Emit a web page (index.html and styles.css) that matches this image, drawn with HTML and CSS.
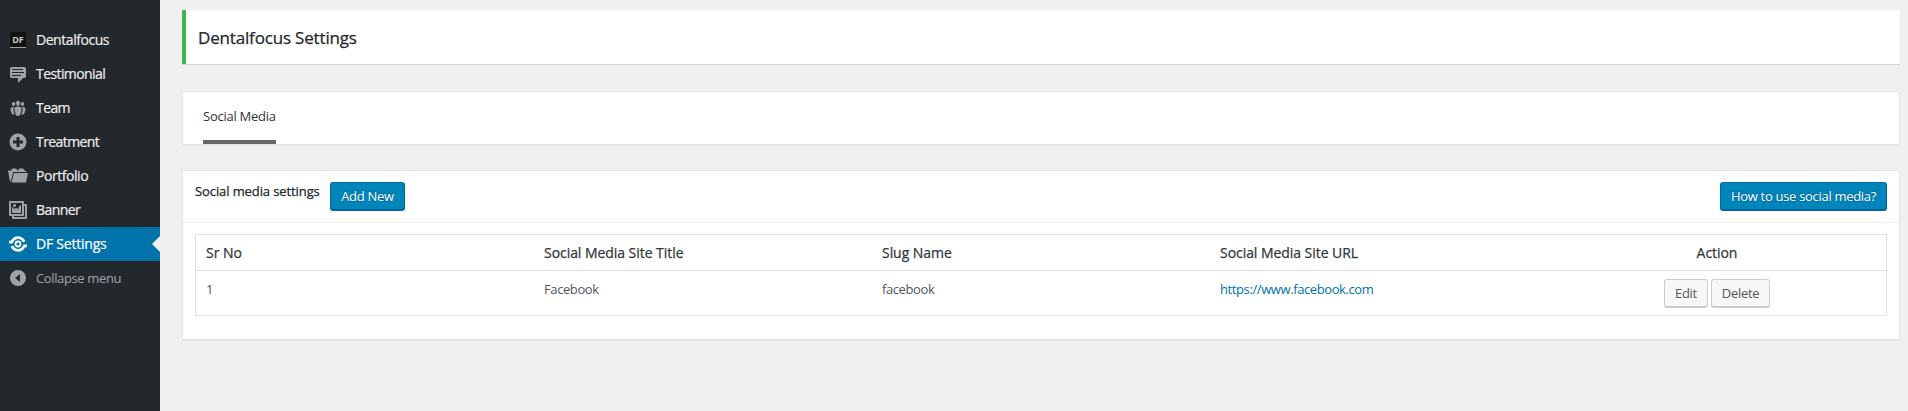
FILE: index.html
```html
<!DOCTYPE html>
<html lang="en">
<head>
<meta charset="utf-8">
<title>Dentalfocus Settings</title>
<link rel="stylesheet" href="styles.css">
</head>
<body>
<div class="layout">
  <nav class="sidebar">
    <a class="item"><span class="df-logo">DF</span><span class="label">Dentalfocus</span></a>
    <a class="item"><svg class="icon" viewBox="0 0 20 20"><path d="M4 3h12c.55 0 1.02.2 1.41.59S18 4.45 18 5v7c0 .55-.2 1.02-.59 1.41S16.55 14 16 14h-1l-5 5v-5H4c-.55 0-1.02-.2-1.41-.59S2 12.550 2 12V5c0-.55.2-1.02.59-1.41S3.45 3 4 3zm11 2H4v1h11V5zm1 3H4v1h12V8zm-3 3H4v1h9v-1z"/></svg><span class="label tight">Testimonial</span></a>
    <a class="item"><svg class="icon" viewBox="0 0 20 20"><path d="M8.03 4.46c-.29 1.28.55 3.46 1.97 3.46 1.41 0 2.25-2.18 1.96-3.46-.22-.98-1.08-1.63-1.96-1.63-.89 0-1.74.65-1.97 1.63zm-4.13.9c-.25 1.08.47 2.93 1.67 2.93s1.92-1.85 1.67-2.93c-.19-.83-.92-1.39-1.67-1.39s-1.48.56-1.67 1.39zm8.86 0c-.25 1.08.47 2.93 1.66 2.93 1.2 0 1.92-1.85 1.67-2.93-.19-.83-.92-1.390-1.670-1.390-.74 0-1.470.56-1.660 1.390zm-.59 11.430l1.250-4.300C14.200 10 12.710 8.470 10 8.470c-2.720 0-4.210 1.530-3.440 4.020l1.260 4.300C8.050 17.510 9 18 10 18c.98 0 1.940-.49 2.170-1.210zM6.100 9.160C3.200 8.600 1.900 10.200 2.600 12.200l1.100 3.400c.3.800 1.500 1.200 2.900.9l-1.100-3.700C5.100 11.200 5.300 10 6.100 9.160zM13.900 9.160c2.900-.56 4.200 1.040 3.500 3.040l-1.100 3.400c-.3.800-1.500 1.200-2.900.9l1.100-3.700c.4-1.600.2-2.800-.6-3.640z"/></svg><span class="label tight">Team</span></a>
    <a class="item"><svg class="icon" viewBox="0 0 20 20"><path fill-rule="evenodd" d="M10 1.500a8.500 8.500 0 1 1 0 17 8.500 8.500 0 0 1 0-17zM8.500 5v3.500H5v3h3.500V15h3v-3.500H15v-3h-3.500V5z"/></svg><span class="label tight">Treatment</span></a>
    <a class="item"><svg class="icon" viewBox="0 0 20 20"><path d="M0 4.500h3.500V3.500L4.500 2.500H8l1 1v1h1.500v-1l1-1H15l1 1v1h2V6H5.300L3 14.500 2 16z"/><path d="M3.500 16.500L6 7h14l-2 9.500z"/></svg><span class="label">Portfolio</span></a>
    <a class="item"><svg class="icon" viewBox="0 0 20 20"><path d="M16 4h1.96c.57 0 1.04.47 1.04 1.04v12.92c0 .57-.47 1.04-1.04 1.04H5.04C4.47 19 4 18.530 4 17.960V16H2.040C1.470 16 1 15.530 1 14.960V2.040C1 1.470 1.470 1 2.040 1h12.920c.57 0 1.040.47 1.040 1.040V4zM3 14h11V3H3v11zm5-8.500C8 4.670 7.330 4 6.500 4S5 4.670 5 5.500 5.670 7 6.500 7 8 6.330 8 5.500zm2 4.500s1-5 3-5v8H4V7c2 0 2 3 2 3s.33-2 2-2 2 2 2 2zm7 7V6h-1v8.960c0 .57-.47 1.040-1.040 1.040H6v1h11z"/></svg><span class="label tight">Banner</span></a>
    <a class="item current"><svg class="icon" viewBox="0 0 20 20"><g fill="none" stroke="currentColor"><circle cx="10" cy="10" r="2.500" stroke-width="1.800"/><path stroke-width="2.800" d="M1 8.200h2.600C5.200 5.200 7 3.700 10 3.700c3 0 4.800 1.500 6.200 4.100M19 11.800h-2.600C14.800 14.800 13 16.300 10 16.300c-3 0-4.800-1.500-6.200-4.100"/></g></svg><span class="label settings">DF Settings</span></a>
    <a class="item collapse"><svg class="icon" viewBox="0 0 20 20"><path fill-rule="evenodd" d="M10 2a8 8 0 1 1 0 16 8 8 0 0 1 0-16zM12 6l-5 4 5 4z"/></svg><span class="label">Collapse menu</span></a>
  </nav>
  <main class="content">
    <header class="page-header"><h1 class="page-title">Dentalfocus Settings</h1></header>
    <div class="tabs"><a class="tab">Social Media</a></div>
    <section class="panel">
      <div class="panel-head">
        <h2 class="panel-title">Social media settings</h2>
        <button class="button primary add">Add New</button>
        <button class="button primary help">How to use social media?</button>
      </div>
      <div class="grid">
        <div class="row head">
          <span class="cell">Sr No</span><span class="cell">Social Media Site Title</span><span class="cell">Slug Name</span><span class="cell">Social Media Site URL</span><span class="cell center">Action</span>
        </div>
        <div class="row">
          <span class="cell">1</span><span class="cell">Facebook</span><span class="cell">facebook</span><span class="cell"><a class="link">https://www.facebook.com</a></span>
          <span class="cell actions"><button class="button edit">Edit</button><button class="button delete">Delete</button></span>
        </div>
      </div>
    </section>
  </main>
</div>
</body>
</html>
```
FILE: styles.css
```css
* { box-sizing: border-box; }
body { margin: 0; background: #f0f0f0; color: #23282d; font-family: "Open Sans", "Noto Sans", sans-serif; font-size: 13px; line-height: 20px; }
.layout { display: flex; height: 411px; overflow: hidden; }
.sidebar { width: 160px; flex: none; padding-top: 23px; background: #23282d; }
.item { position: relative; display: flex; align-items: center; height: 34px; padding-left: 8px; color: #9ea3a8; font-size: 14px; white-space: nowrap; }
.icon { width: 20px; height: 20px; flex: none; fill: currentColor; }
.label { margin-left: 8px; color: #eee; letter-spacing: -0.45px; -webkit-text-stroke: 0.2px; }
.tight { letter-spacing: -0.58px; }
.df-logo { width: 16px; height: 16px; margin: 0 2px; background: #111; border-bottom: 1px solid #9ea3a8; color: #ccc; font-size: 9px; font-weight: 700; line-height: 15px; text-align: center; }
.current { background: #0073aa; color: #fff; }
.settings { color: #fff; letter-spacing: -0.22px; }
.current::after { content: ""; position: absolute; right: 0; top: 9px; border: 8px solid transparent; border-left-width: 0; border-right-color: #f0f0f0; }
.collapse .label { color: #a0a5aa; font-size: 13px; letter-spacing: -0.37px; -webkit-text-stroke: 0; }
.content { flex: 1; padding: 10px 8px 0 22px; }
.page-header { height: 54px; padding: 2px 0 0 12px; display: flex; align-items: center; background: #fff; border-left: 4px solid #46b450; box-shadow: 0 1px 1px rgba(0,0,0,.1); }
.page-title { margin: 0; font-size: 17px; font-weight: 500; letter-spacing: -0.17px; -webkit-text-stroke: 0.25px; }
.tabs { height: 54px; margin-top: 27px; padding-left: 20px; display: flex; background: #fff; border: 1px solid #e5e5e5; box-shadow: 0 1px 1px rgba(0,0,0,.04); }
.tab { width: 73px; padding-top: 14px; border-bottom: 4px solid #666; font-size: 13px; color: #333; letter-spacing: -0.25px; white-space: nowrap; }
.panel { height: 170px; margin-top: 25px; background: #fff; border: 1px solid #e5e5e5; box-shadow: 0 1px 1px rgba(0,0,0,.04); }
.panel-head { display: flex; height: 52px; padding: 11px 12px 0; border-bottom: 1px solid #eee; }
.panel-title { width: 124px; margin: -1px 0 0; font-size: 13px; font-weight: 500; letter-spacing: -0.1px; white-space: nowrap; -webkit-text-stroke: 0.25px; }
.button { height: 29px; padding: 0; border: 1px solid #ccc; border-bottom-width: 2px; border-radius: 3px; background: #f7f7f7; color: #555; font: 13px/25px "Open Sans", sans-serif; letter-spacing: -0.3px; white-space: nowrap; }
.primary { background: #0085ba; border-color: #0073aa #006799 #006799; color: #fff; text-shadow: 0 -1px 1px #006799, 0 1px 1px #006799; }
.add { width: 75px; margin-left: 11px; }
.help { width: 167px; margin-left: auto; }
.grid { margin: 11px 12px 0; border: 1px solid #e1e1e1; }
.row { display: grid; grid-template-columns: repeat(5, 1fr); height: 44px; color: #555; }
.cell { padding: 8px 10px; letter-spacing: -0.4px; }
.head { height: 36px; border-bottom: 1px solid #e1e1e1; color: #32373c; font-size: 14px; font-weight: 500; -webkit-text-stroke: 0.25px; }
.head .cell { letter-spacing: -0.05px; }
.center { text-align: center; }
.link { color: #0073aa; }
.actions { display: flex; justify-content: center; gap: 3px; }
.edit { width: 44px; }
.delete { width: 59px; }
```
